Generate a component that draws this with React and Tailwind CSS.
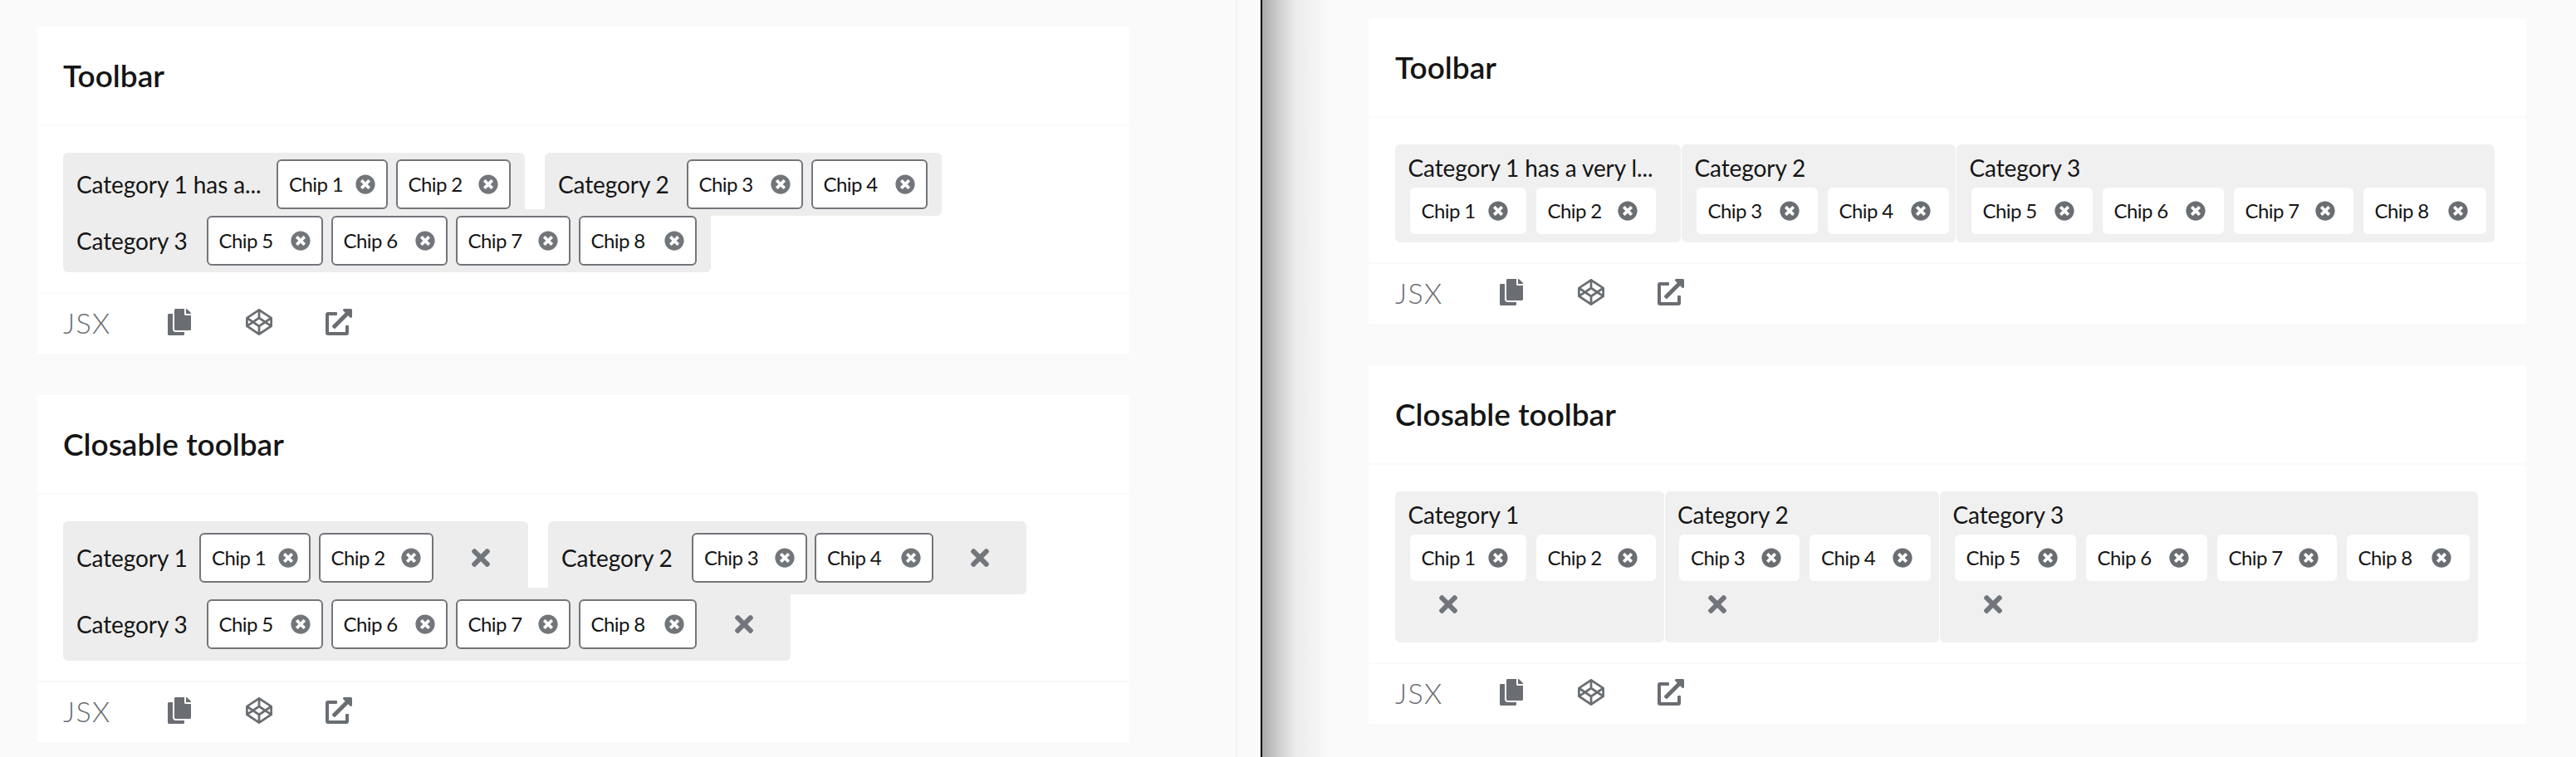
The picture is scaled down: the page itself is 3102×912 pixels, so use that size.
import { FaCodepen, FaCopy, FaExternalLinkAlt, FaTimes, FaTimesCircle } from 'react-icons/fa'

const font = { fontFamily: 'Lato, "Noto Sans", sans-serif' }

function Chip({ label, width, outlined }) {
  return (
    <div
      className={`flex shrink-0 items-center justify-between rounded-[6px] bg-white text-[24px] tracking-[-0.6px] text-[#151515] ${width} ${
        outlined ? 'h-[60px] border-2 border-[#72767b] pl-[13px] pr-[13px]' : 'h-[56px] pl-[14px] pr-[22px]'
      }`}
    >
      <span>{label}</span>
      <FaTimesCircle size={24} className={outlined ? 'text-[#72767b]' : 'text-[#6a6e73]'} />
    </div>
  )
}

function CloseButton({ className }) {
  return (
    <span className={`flex shrink-0 items-center justify-center text-[#72767b] ${className}`}>
      <FaTimes size={32} />
    </span>
  )
}

// inline group: label and chips on one row, used in the left pane
function InlineGroup({ label, labelWidth, chips, width, close, closeClass, className = '' }) {
  return (
    <div className={`flex items-center rounded-[6px] bg-[#ededed] pl-4 ${width} ${className}`}>
      <span className={`shrink-0 whitespace-nowrap text-[28px] tracking-[-0.1px] text-[#151515] ${labelWidth}`}>{label}</span>
      <div className="flex gap-[9.5px]">
        {chips.map(([name, w]) => (
          <Chip key={name} label={name} width={w} outlined />
        ))}
      </div>
      {close && <CloseButton className={closeClass} />}
    </div>
  )
}

// stacked group: label over chips, used in the right pane
function StackedGroup({ label, chips, width, close }) {
  return (
    <div className={`flex flex-col rounded-[6px] bg-[#f0f0f0] pl-[15.5px] ${width}`}>
      <span className="mt-[5px] h-[47px] whitespace-nowrap text-[28px] leading-[46px] tracking-[-0.1px] text-[#151515]">{label}</span>
      <div className="ml-[2px] flex gap-3">
        {chips.map(([name, w]) => (
          <Chip key={name} label={name} width={w} />
        ))}
      </div>
      {close && <CloseButton className="ml-[37px] mt-[17px] h-[22px] w-[22px]" />}
    </div>
  )
}

function Card({ title, children }) {
  return (
    <div className="bg-white">
      <div className="flex h-[120px] items-center border-b-2 border-[#fafafa] pl-8 text-[37px] font-semibold text-[#151515]">
        {title}
      </div>
      <div className="px-8 pb-6 pt-8">{children}</div>
      <div className="flex h-[74px] items-center border-t-2 border-[#fafafa] pb-1 pl-8 text-[#6a6e73]">
        <span className="w-[124px] text-[34px] font-light tracking-[1.5px]">JSX</span>
        <FaCopy size={32} />
        <span className="w-[64px]" />
        <FaCodepen size={32} />
        <span className="w-[64px]" />
        <FaExternalLinkAlt size={32} />
      </div>
    </div>
  )
}

const first = [['Chip 1', 'w-[134px]'], ['Chip 2', 'w-[138.5px]']]
const last = [['Chip 5', 'w-[140.5px]'], ['Chip 6', 'w-[140.5px]'], ['Chip 7', 'w-[138.5px]'], ['Chip 8', 'w-[142.5px]']]
const sideFirst = [['Chip 1', 'w-[140px]'], ['Chip 2', 'w-[144px]']]
const sideLast = [['Chip 5', 'w-[146px]'], ['Chip 6', 'w-[146px]'], ['Chip 7', 'w-[144px]'], ['Chip 8', 'w-[148px]']]

export default function App() {
  return (
    <div className="flex h-[912px] w-[3102px] overflow-hidden bg-[#fafafa]" style={font}>
      <div className="h-full w-[1490px] shrink-0 border-r-2 border-[#f0f0f0] pl-[44px] pr-[128px] pt-8">
        <div className="flex flex-col gap-[50px]">
          <Card title="Toolbar">
            <div className="flex flex-wrap gap-x-6">
              <InlineGroup label="Category 1 has a..." labelWidth="w-[241px]" width="h-[76px] w-[556px]" chips={first} />
              <InlineGroup label="Category 2" labelWidth="w-[154.5px]" width="h-[76px] w-[478px]"
                chips={[['Chip 3', 'w-[140.5px]'], ['Chip 4', 'w-[140.5px]']]} />
              <InlineGroup label="Category 3" labelWidth="w-[156.5px]" width="-mt-2 h-[76px] w-[780px]" chips={last} />
            </div>
          </Card>
          <Card title="Closable toolbar">
            <div className="flex flex-wrap gap-x-6">
              <InlineGroup label="Category 1" labelWidth="w-[148px]" width="h-[88px] w-[560px]" close closeClass="ml-[46px] w-[22px]" chips={first} />
              <InlineGroup label="Category 2" labelWidth="w-[157px]" width="h-[88px] w-[576px]" close closeClass="ml-[45px] w-[22px]"
                chips={[['Chip 3', 'w-[138.5px]'], ['Chip 4', 'w-[143px]']]} />
              <InlineGroup label="Category 3" labelWidth="w-[156.5px]" width="-mt-2 h-[88px] w-[876px]" close closeClass="ml-[46px] w-[22px]" chips={last} />
            </div>
          </Card>
        </div>
      </div>
      <div className="w-[28px] shrink-0" />
      <div className="h-full flex-1 border-l-2 border-black bg-[linear-gradient(to_right,#a9a9a9,#cfcfcf_20px,#ebebeb_40px,#fafafa_80px)] pl-[128px] pr-[60px] pt-[22px]">
        <div className="flex flex-col gap-[50px]">
          <Card title="Toolbar">
            <div className="flex gap-px">
              <StackedGroup label="Category 1 has a very l..." width="h-[118px] w-[344px]" chips={sideFirst} />
              <StackedGroup label="Category 2" width="h-[118px] w-[330px]"
                chips={[['Chip 3', 'w-[146px]'], ['Chip 4', 'w-[146px]']]} />
              <StackedGroup label="Category 3" width="h-[118px] w-[648px]" chips={sideLast} />
            </div>
          </Card>
          <Card title="Closable toolbar">
            <div className="flex gap-px">
              <StackedGroup label="Category 1" width="h-[182px] w-[323.5px]" close chips={sideFirst} />
              <StackedGroup label="Category 2" width="h-[182px] w-[330.5px]" close
                chips={[['Chip 3', 'w-[145px]'], ['Chip 4', 'w-[146px]']]} />
              <StackedGroup label="Category 3" width="h-[182px] w-[648px]" close chips={sideLast} />
            </div>
          </Card>
        </div>
      </div>
    </div>
  )
}
